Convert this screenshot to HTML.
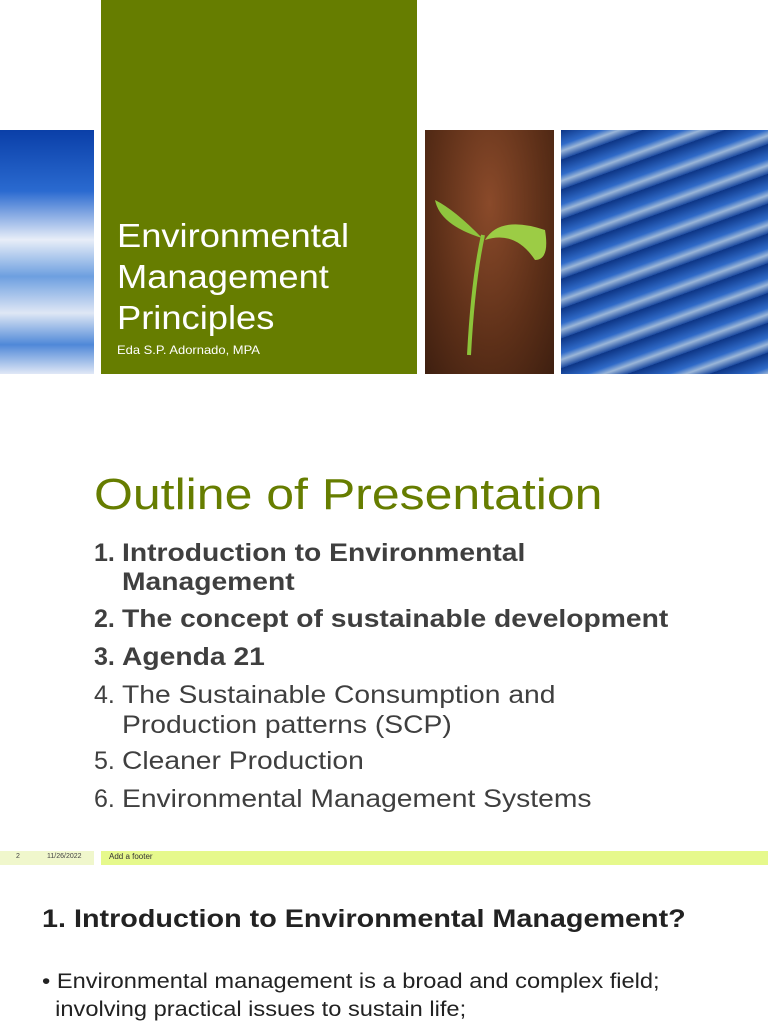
<!DOCTYPE html>
<html><head><meta charset="utf-8"><style>
body{margin:0;width:768px;height:1024px;background:#fff;position:relative;overflow:hidden;font-family:"Liberation Sans",sans-serif}
div{position:absolute}
.t{white-space:nowrap;transform-origin:0 0}
.li{color:#3f3f3f;font-size:25px;left:94px;white-space:nowrap}
.li span{display:inline-block;width:28px;vertical-align:top}
.s{display:inline-block;vertical-align:top;transform:scaleX(1.13);transform-origin:0 0;font-style:normal}
</style></head><body>
<div style="left:0;top:130px;width:94px;height:244px;background:linear-gradient(180deg,#0a3fa8 0%,#2a6ad0 25%,#e8eef8 45%,#6d9fe0 60%,#dfe7f5 75%,#4f88d8 88%,#e0e8f6 100%)"></div>
<div style="left:101px;top:0;width:316px;height:374px;background:#667d00"></div>
<div class="t" style="left:117px;top:215px;color:#fff;font-size:33px;line-height:41px;transform:scaleX(1.1)">Environmental<br>Management<br>Principles</div>
<div class="t" style="left:117px;top:343px;color:#fff;font-size:12px;transform:scaleX(1.08)">Eda S.P. Adornado, MPA</div>
<div style="left:425px;top:130px;width:129px;height:244px;background:radial-gradient(ellipse at 50% 30%,#8a4a2a,#5c2f18 60%,#3e1f10)"></div>
<svg style="position:absolute;left:425px;top:130px" width="129" height="244"><path d="M44 225 Q48 150 58 105" stroke="#8cc43a" stroke-width="4" fill="none"/><path d="M57 108 Q30 80 10 70 Q15 95 57 108Z" fill="#8fc53e"/><path d="M60 110 Q75 85 120 100 Q125 130 110 130 Q90 100 60 110Z" fill="#9ccc45"/></svg>
<div style="left:561px;top:130px;width:207px;height:244px;background:repeating-linear-gradient(160deg,#0d3585 0px,#2f6ac8 14px,#9bb6d8 20px,#1c4aa0 28px)"></div>
<div class="t" style="left:94px;top:470px;color:#667d00;font-size:44px;transform:scaleX(1.136)">Outline of Presentation</div>
<div class="li" style="top:539px;font-weight:bold;line-height:29px"><span>1.</span><i class="s">Introduction to Environmental<br>Management</i></div>
<div class="li" style="top:605px;font-weight:bold"><span>2.</span><i class="s">The concept of sustainable development</i></div>
<div class="li" style="top:643px;font-weight:bold"><span>3.</span><i class="s">Agenda 21</i></div>
<div class="li" style="top:680px;line-height:30px"><span>4.</span><i class="s">The Sustainable Consumption and<br>Production patterns (SCP)</i></div>
<div class="li" style="top:747px"><span>5.</span><i class="s">Cleaner Production</i></div>
<div class="li" style="top:785px"><span>6.</span><i class="s">Environmental Management Systems</i></div>
<div style="left:0;top:851px;width:94px;height:14px;background:#f0f7cc"></div>
<div style="left:101px;top:851px;width:667px;height:14px;background:#e6f98c"></div>
<div class="t" style="left:16px;top:853px;font-size:7px;color:#444">2</div>
<div class="t" style="left:47px;top:853px;font-size:7px;color:#444">11/26/2022</div>
<div class="t" style="left:109px;top:852px;font-size:8px;color:#333">Add a footer</div>
<div class="t" style="left:42px;top:905px;font-size:25px;font-weight:bold;color:#222;transform:scaleX(1.15)">1. Introduction to Environmental Management?</div>
<div class="t" style="left:42px;top:968px;font-size:21px;color:#222;line-height:28px;transform:scaleX(1.125)">• Environmental management is a broad and complex field;<br>&nbsp;&nbsp;involving practical issues to sustain life;</div>
</body></html>
